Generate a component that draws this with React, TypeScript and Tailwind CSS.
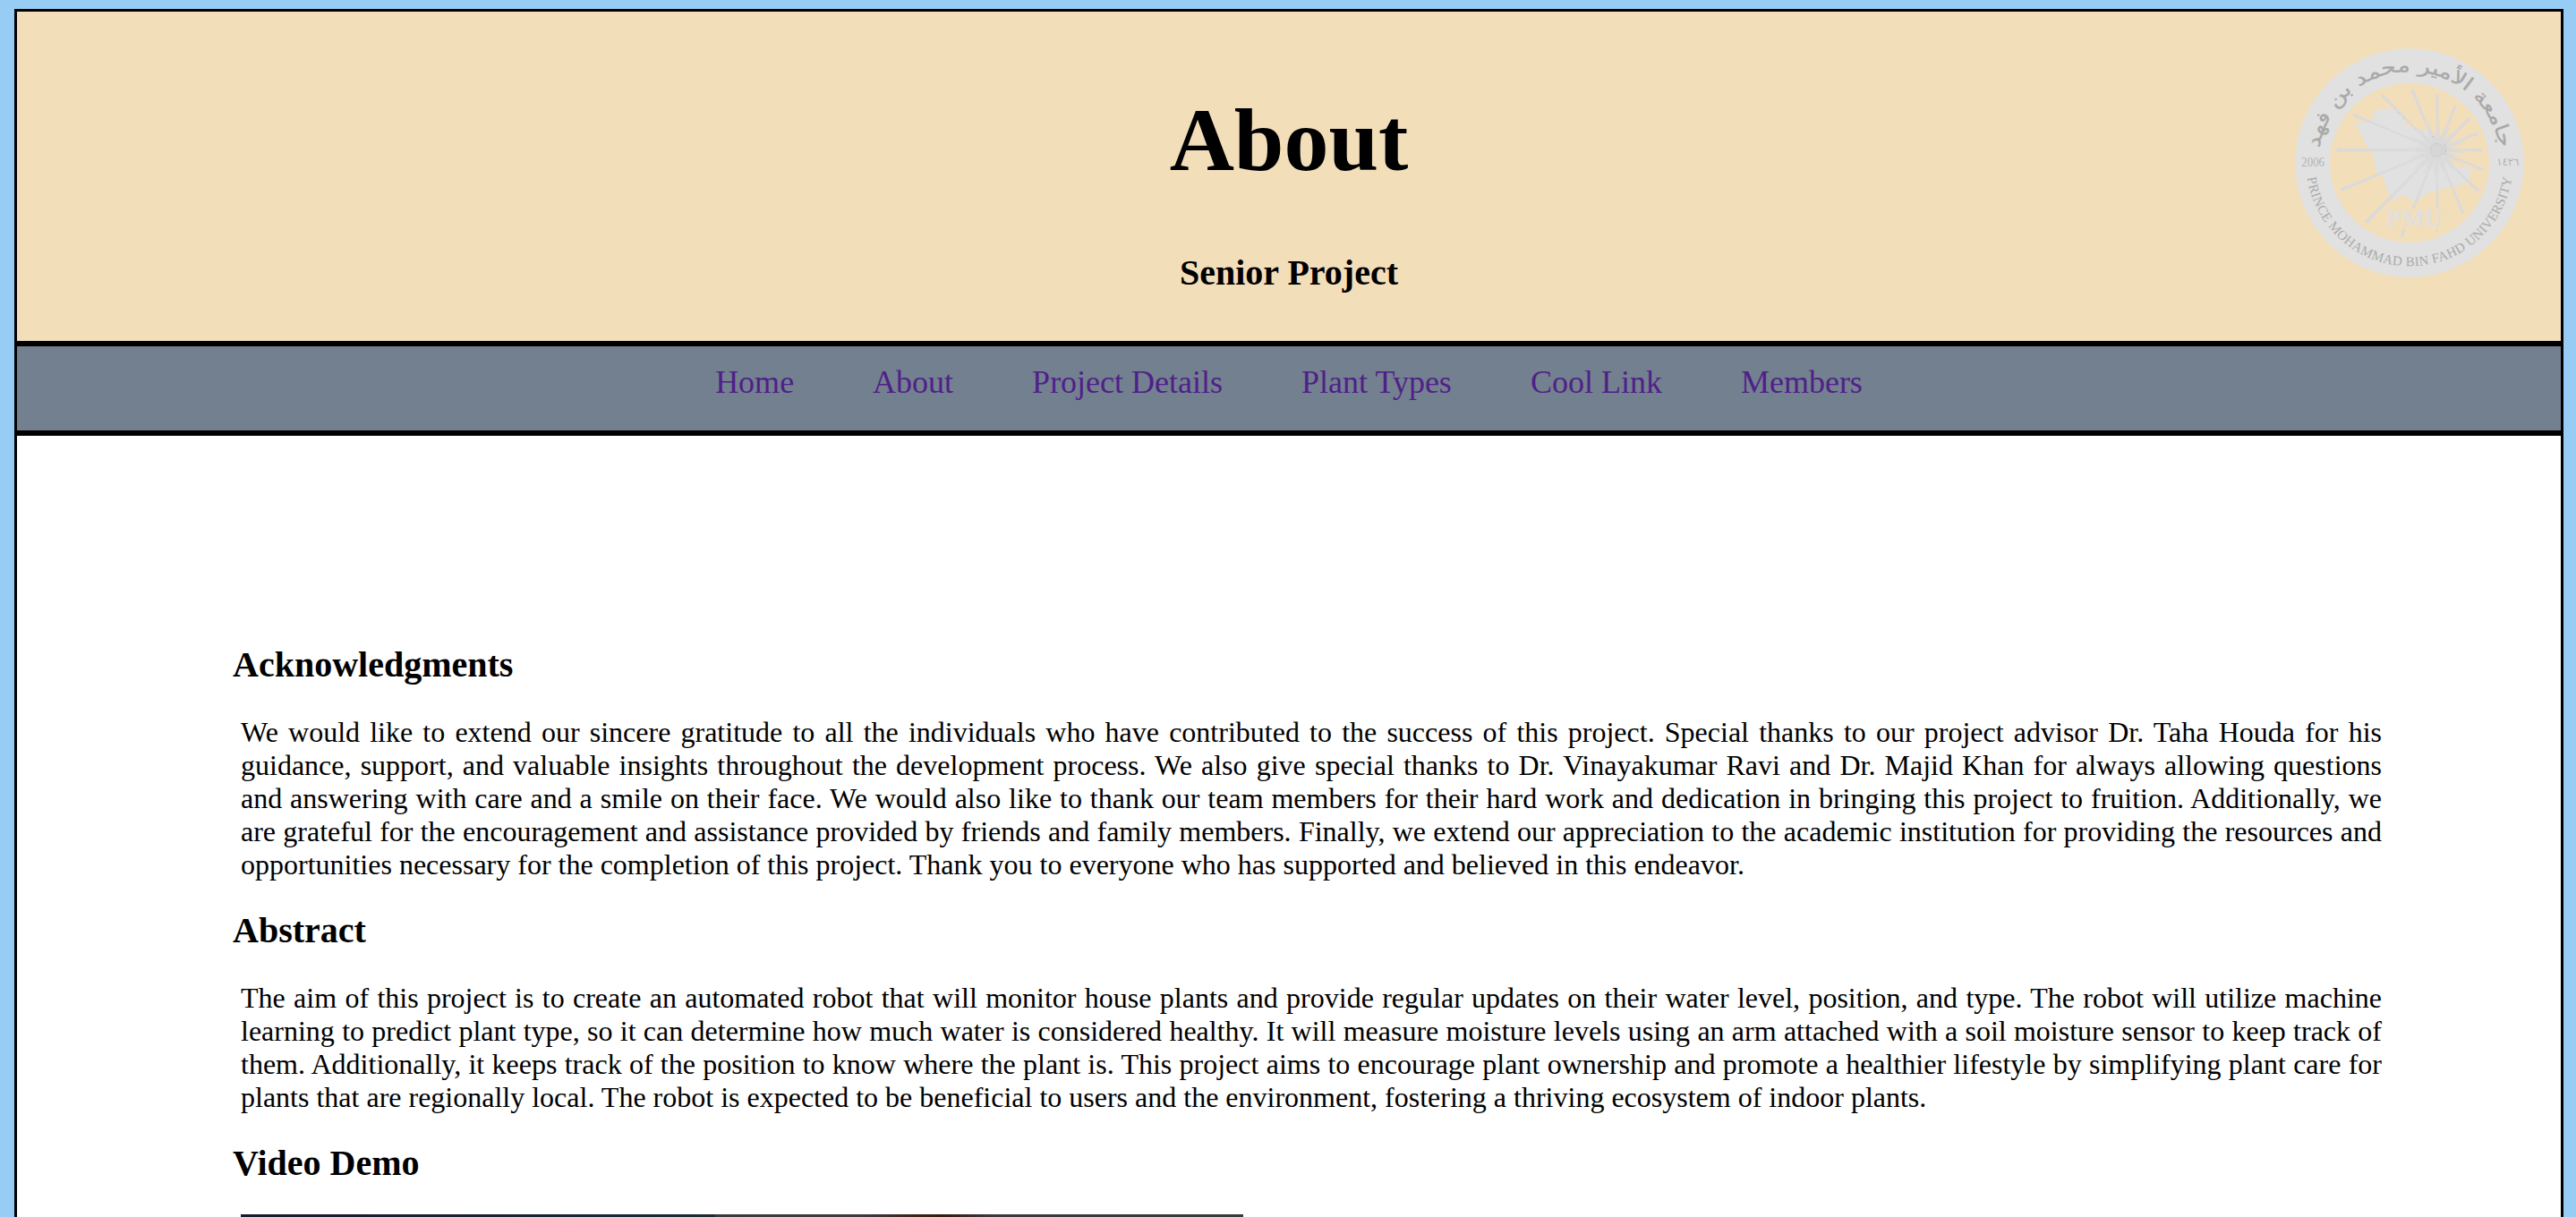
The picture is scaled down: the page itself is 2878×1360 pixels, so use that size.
import type { ReactNode } from "react";

const links = ["Home", "About", "Project Details", "Plant Types", "Cool Link", "Members"];

const rays: [number, number, number][] = [
  [363, 228, 10], [464, 209, 10], [549, 226, 10], [611, 262, 10], [656, 309, 10],
  [685, 357, 10], [700, 413, 10], [704, 479, 10], [686, 551, 10], [636, 627, 10],
  [549, 608, 9], [469, 608, 10], [311, 655, 12], [226, 547, 11], [212, 413, 12], [267, 295, 10],
];

const shortRays = Array.from({ length: 32 }, (_, i) => {
  const a = ((i + 0.5) * Math.PI) / 16;
  const r = i % 2 ? 80 : 105;
  return [548 + r * Math.cos(a), 413 + r * Math.sin(a)];
});

function ray(x: number, y: number, w: number) {
  const dx = x - 548;
  const dy = y - 413;
  const l = Math.hypot(dx, dy);
  const nx = (-dy / l) * (w / 2);
  const ny = (dx / l) * (w / 2);
  return `${x + nx},${y + ny} ${x - nx},${y - ny} ${548 - nx * 0.4},${413 - ny * 0.4} ${548 + nx * 0.4},${413 + ny * 0.4}`;
}

function Seal() {
  return (
    <svg viewBox="72 72 768 768" className="absolute top-[41px] right-[41px] size-64">
      <defs>
        <path id="arcTop" d="M150 456 A306 306 0 0 1 762 456" />
        <path id="arcBottom" d="M110 456 A346 346 0 0 0 802 456" />
      </defs>
      <circle cx="456" cy="456" r="325" fill="none" stroke="#e1e1e1" strokeWidth="116" />
      <path
        fill="#e1e1e1"
        d="M331 283 L378 273 L410 278 L437 306 L441 326 L460 340 L500 343 L527 355 L537 378 L545 390 L570 390 L578 420 L580 440 L606 462 L630 472 L646 468 L663 477 L652 522 L520 555 L476 587 L440 567 L414 568 L412 585 L405 585 L380 545 L368 505 L343 485 L335 430 L310 395 L290 350 L273 330 L282 321 L300 322 L320 308 L343 305 Z"
      />
      {rays.map(([x, y, w]) => (
        <polygon key={`${x}-${y}`} points={ray(x, y, w)} fill="#dadada" />
      ))}
      {shortRays.map(([x, y]) => (
        <polygon
          key={`${x}-${y}`}
          points={`${x},${y} ${548 - (y - 413) * 0.07},${413 + (x - 548) * 0.07} ${548 + (y - 413) * 0.07},${413 - (x - 548) * 0.07}`}
          fill="#dadada"
        />
      ))}
      <circle cx="548" cy="413" r="30" fill="#dadada" />
      <circle cx="548" cy="413" r="22" fill="#d6d6d6" stroke="#bdbdbd" strokeWidth="2" strokeDasharray="4 2" />
      <path d="M573 393 l4 10 l1 12 l-2 14 M535 366 v8 M417 287 l4 4 M434 306 l4 4" fill="none" stroke="#b4b4b4" strokeWidth="3" strokeDasharray="4 4" />
      <path d="M432 678 L444 678 L434 704 L425 704 Z M543 680 L549 676 L554 682 L548 690 Z" fill="#dadada" />
      <text x="378" y="669" fontSize="82" fontWeight="bold" textLength="188" lengthAdjust="spacingAndGlyphs" fill="#dfdfdf" className="font-['Liberation_Serif',serif]">PMU</text>
      <text fontSize="66" fill="#a9a9a9" stroke="#a9a9a9" strokeWidth="1" textAnchor="middle" className="font-['DejaVu_Sans',sans-serif]">
        <textPath href="#arcTop" startOffset="50%" textLength="862" lengthAdjust="spacingAndGlyphs">جامعة الأمير محمد بن فهد</textPath>
      </text>
      <text fontSize="45" fill="#ababab" className="font-['Liberation_Serif',serif]">
        <textPath href="#arcBottom" startOffset="50" textLength="987">PRINCE MOHAMMAD BIN FAHD UNIVERSITY</textPath>
      </text>
      <text x="94" y="468" fontSize="41" fill="#b2b2b2" textLength="77" lengthAdjust="spacingAndGlyphs" className="font-['Liberation_Serif',serif]">2006</text>
      <text x="748" y="466" fontSize="36" fill="#b2b2b2" textLength="75" className="font-['DejaVu_Sans',sans-serif]">١٤٢٦</text>
    </svg>
  );
}

function Section({ title, children }: { title: string; children: ReactNode }) {
  return (
    <section>
      <h2 className="h-[46px] text-[40px] leading-[46px] font-bold">{title}</h2>
      <div className="ml-[9px] pt-[34px]">{children}</div>
    </section>
  );
}

export default function App() {
  return (
    <div className="h-[1360px] overflow-hidden bg-[#97cdf5] pt-[10px] pr-[14px] pl-4 font-['Liberation_Serif',serif] text-black">
      <div className="h-[1400px] border-[3px] border-black bg-white">
        <header className="relative flex h-[374px] flex-col items-center border-b-[6px] border-black bg-[#f3deba]">
          <h1 className="mt-[86px] text-[100px] leading-[115px] font-bold">About</h1>
          <p className="mt-[68px] text-[40px] leading-[46px] font-bold">Senior Project</p>
          <Seal />
        </header>
        <nav className="flex h-[100px] justify-center gap-[88px] border-b-6 border-black bg-[#73808f] pt-5 text-[36px] leading-[41px] text-[#501f89]">
          {links.map((l) => (
            <a key={l} href="#" className="whitespace-nowrap">{l}</a>
          ))}
        </nav>
        <main className="ml-[241px] flex w-[2401px] flex-col gap-8 pt-[233px]">
          <Section title="Acknowledgments">
            <p className="text-justify text-[32px] leading-[37px]">
              We would like to extend our sincere gratitude to all the individuals who have contributed to the success of this project. Special thanks to our project advisor Dr. Taha Houda for his guidance, support, and valuable insights throughout the development process. We also give special thanks to Dr. Vinayakumar Ravi and Dr. Majid Khan for always allowing questions and answering with care and a smile on their face. We would also like to thank our team members for their hard work and dedication in bringing this project to fruition. Additionally, we are grateful for the encouragement and assistance provided by friends and family members. Finally, we extend our appreciation to the academic institution for providing the resources and opportunities necessary for the completion of this project. Thank you to everyone who has supported and believed in this endeavor.
            </p>
          </Section>
          <Section title="Abstract">
            <p className="text-justify text-[32px] leading-[37px]">
              The aim of this project is to create an automated robot that will monitor house plants and provide regular updates on their water level, position, and type. The robot will utilize machine learning to predict plant type, so it can determine how much water is considered healthy. It will measure moisture levels using an arm attached with a soil moisture sensor to keep track of them. Additionally, it keeps track of the position to know where the plant is. This project aims to encourage plant ownership and promote a healthier lifestyle by simplifying plant care for plants that are regionally local. The robot is expected to be beneficial to users and the environment, fostering a thriving ecosystem of indoor plants.
            </p>
          </Section>
          <Section title="Video Demo">
            <div className="h-[630px] w-[1120px] bg-[linear-gradient(90deg,#181a2b_0%,#182330_30%,#1c2a33_47.2%,#3d3840_47.4%,#403840_62%,#3b2418_67%,#331a0c_70%,#3f373d_75%,#3a373f_100%)]" />
          </Section>
        </main>
      </div>
    </div>
  );
}
